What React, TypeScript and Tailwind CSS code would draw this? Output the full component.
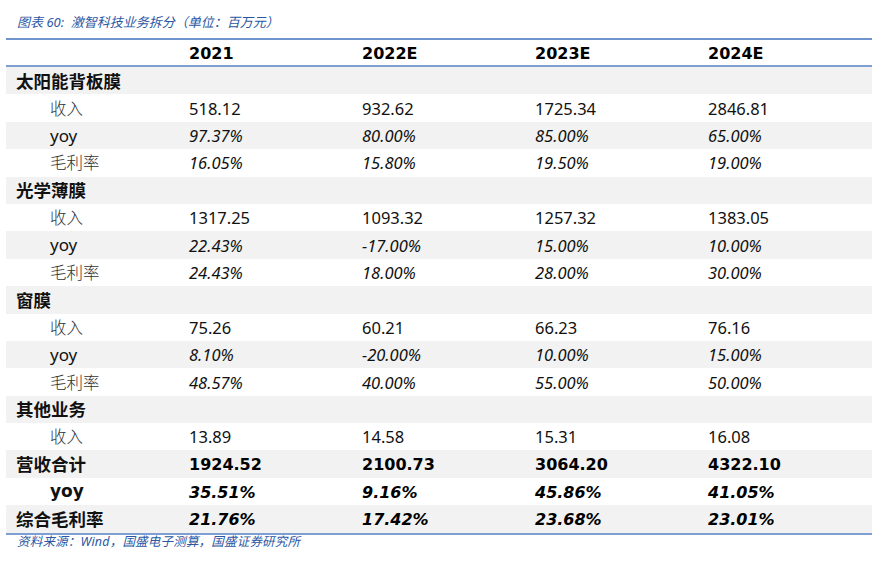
import React from "react";

type Row = {
  label: string;
  kind: "cat" | "sub" | "total";
  italic?: boolean;
  values?: string[];
};

const rows: Row[] = [
  { label: "太阳能背板膜", kind: "cat" },
  { label: "收入", kind: "sub", values: ["518.12", "932.62", "1725.34", "2846.81"] },
  { label: "yoy", kind: "sub", italic: true, values: ["97.37%", "80.00%", "85.00%", "65.00%"] },
  { label: "毛利率", kind: "sub", italic: true, values: ["16.05%", "15.80%", "19.50%", "19.00%"] },
  { label: "光学薄膜", kind: "cat" },
  { label: "收入", kind: "sub", values: ["1317.25", "1093.32", "1257.32", "1383.05"] },
  { label: "yoy", kind: "sub", italic: true, values: ["22.43%", "-17.00%", "15.00%", "10.00%"] },
  { label: "毛利率", kind: "sub", italic: true, values: ["24.43%", "18.00%", "28.00%", "30.00%"] },
  { label: "窗膜", kind: "cat" },
  { label: "收入", kind: "sub", values: ["75.26", "60.21", "66.23", "76.16"] },
  { label: "yoy", kind: "sub", italic: true, values: ["8.10%", "-20.00%", "10.00%", "15.00%"] },
  { label: "毛利率", kind: "sub", italic: true, values: ["48.57%", "40.00%", "55.00%", "50.00%"] },
  { label: "其他业务", kind: "cat" },
  { label: "收入", kind: "sub", values: ["13.89", "14.58", "15.31", "16.08"] },
  { label: "营收合计", kind: "total", values: ["1924.52", "2100.73", "3064.20", "4322.10"] },
  { label: "yoy", kind: "total", italic: true, values: ["35.51%", "9.16%", "45.86%", "41.05%"] },
  { label: "综合毛利率", kind: "total", italic: true, values: ["21.76%", "17.42%", "23.68%", "23.01%"] },
];

const years = ["2021", "2022E", "2023E", "2024E"];

function LabelCell({ row }: { row: Row }) {
  // group headings and total rows use bold CJK
  if (row.kind === "cat" || (row.kind === "total" && row.label !== "yoy")) {
    return (
      <div className="pl-[10px] font-['Noto_Sans_CJK_SC',sans-serif] text-[17.5px] font-bold text-[#111]">
        {row.label}
      </div>
    );
  }
  if (row.kind === "total") {
    return (
      <div className="pl-[44px] font-['DejaVu_Sans',sans-serif] text-[17px] font-bold text-[#111]">
        {row.label}
      </div>
    );
  }
  if (row.label === "yoy") {
    return (
      <div className="pl-[44px] font-['Noto_Sans',sans-serif] text-[17px] text-[#111]">
        {row.label}
      </div>
    );
  }
  return (
    <div className="pl-[44px] font-['Noto_Sans_CJK_SC',sans-serif] text-[16.5px] font-light text-[#333]">
      {row.label}
    </div>
  );
}

export default function App() {
  return (
    <div className="h-[568px] w-[874px] bg-white pl-[6px] pr-[2px] pt-[13px]">
      <div className="pl-[11px] font-['Noto_Sans','Noto_Sans_CJK_SC',sans-serif] text-[13px] italic leading-[18px] text-[#2b57a3]">
        图表 60:&nbsp; 激智科技业务拆分（单位：百万元）
      </div>

      <div className="mt-[7px] border-t-2 border-[#6f95cf]">
        {/* header */}
        <div className="grid h-[27px] grid-cols-[174px_173px_173px_173px_173px] items-center border-b-2 border-[#7f9fd3]">
          <div />
          {years.map((y) => (
            <div
              key={y}
              className="pl-[9px] pt-[2px] font-['DejaVu_Sans',sans-serif] text-[16px] font-bold text-black"
            >
              {y}
            </div>
          ))}
        </div>

        {rows.map((row, i) => (
          <div
            key={i}
            className={`grid h-[27.4px] grid-cols-[174px_173px_173px_173px_173px] items-center ${
              i % 2 === 0 ? "bg-[#f2f2f2]" : "bg-white"
            }`}
          >
            <LabelCell row={row} />
            {(row.values ?? ["", "", "", ""]).map((v, j) => (
              <div
                key={j}
                className={`pl-[9px] pt-[2px] ${
                  row.kind === "total"
                    ? "font-['DejaVu_Sans',sans-serif] text-[16px] font-bold text-black"
                    : "font-['Noto_Sans',sans-serif] text-[16.5px] text-[#111]"
                } ${row.italic ? "italic" : ""}`}
              >
                {v}
              </div>
            ))}
          </div>
        ))}
        <div className="border-t-2 border-[#7f9fd3]" />
      </div>

      <div className="pl-[11px] font-['Noto_Sans','Noto_Sans_CJK_SC',sans-serif] text-[12.5px] italic leading-[14px] tracking-[0.2px] text-[#2b57a3]">
        资料来源：Wind，国盛电子测算，国盛证券研究所
      </div>
    </div>
  );
}
